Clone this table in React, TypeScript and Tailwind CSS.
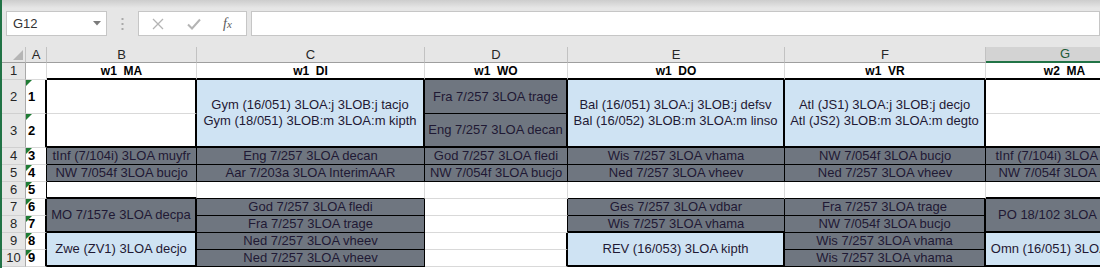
import React from "react";

type Bd = "g" | "t" | "k";
type Fill = "w" | "s" | "b";

const RIGHT: Record<Bd, string> = {
  g: "border-r border-r-[#d9d9d9]",
  t: "border-r border-r-black",
  k: "border-r-2 border-r-black",
};
const BOTTOM: Record<Bd, string> = {
  g: "border-b border-b-[#d9d9d9]",
  t: "border-b border-b-black",
  k: "border-b-2 border-b-black",
};
const FILL: Record<Fill, string> = {
  w: "bg-white",
  s: "bg-[#6f7680]",
  b: "bg-[#cfe3f3]",
};

type Spec = {
  r: Bd;
  b: Bd;
  f?: Fill;
  span?: boolean;
  text?: string[];
  head?: boolean;
};

const W = (r: Bd, b: Bd): Spec => ({ r, b, f: "w" });
const S = (r: Bd, b: Bd, t: string, span = false): Spec => ({ r, b, f: "s", text: [t], span });
const BL = (r: Bd, b: Bd, text: string[], span = false): Spec => ({ r, b, f: "b", text, span });

// columns B..G, cells already covered by a merged cell above are left out
const rows: { a: Bd; cells: Spec[] }[] = [
  {
    a: "g",
    cells: [
      { r: "g", b: "k", text: ["w1  MA"], head: true },
      { r: "g", b: "k", text: ["w1  DI"], head: true },
      { r: "g", b: "k", text: ["w1  WO"], head: true },
      { r: "g", b: "k", text: ["w1  DO"], head: true },
      { r: "g", b: "k", text: ["w1  VR"], head: true },
      { r: "g", b: "k", text: ["w2  MA"], head: true },
    ],
  },
  {
    a: "k",
    cells: [
      W("k", "g"),
      BL("k", "k", ["Gym (16/051) 3LOA:j 3LOB:j tacjo", "Gym (18/051) 3LOB:m 3LOA:m kipth"], true),
      S("k", "t", "Fra 7/257 3LOA trage"),
      BL("k", "k", ["Bal (16/051) 3LOA:j 3LOB:j defsv", "Bal (16/052) 3LOB:m 3LOA:m linso"], true),
      BL("k", "k", ["Atl (JS1) 3LOA:j 3LOB:j decjo", "Atl (JS2) 3LOB:m 3LOA:m degto"], true),
      W("g", "g"),
    ],
  },
  {
    a: "k",
    cells: [W("k", "k"), S("k", "k", "Eng 7/257 3LOA decan"), W("g", "k")],
  },
  {
    a: "t",
    cells: [
      S("t", "t", "tInf (7/104i) 3LOA muyfr"),
      S("t", "t", "Eng 7/257 3LOA decan"),
      S("t", "t", "God 7/257 3LOA fledi"),
      S("t", "t", "Wis 7/257 3LOA vhama"),
      S("t", "t", "NW 7/054f 3LOA bucjo"),
      S("t", "t", "tInf (7/104i) 3LOA muyfr"),
    ],
  },
  {
    a: "t",
    cells: [
      S("t", "t", "NW 7/054f 3LOA bucjo"),
      S("t", "t", "Aar 7/203a 3LOA InterimAAR"),
      S("t", "t", "NW 7/054f 3LOA bucjo"),
      S("t", "t", "Ned 7/257 3LOA vheev"),
      S("t", "t", "Ned 7/257 3LOA vheev"),
      S("t", "t", "NW 7/054f 3LOA bucjo"),
    ],
  },
  {
    a: "t",
    cells: [W("g", "k"), W("g", "t"), W("g", "g"), W("g", "t"), W("g", "t"), W("g", "k")],
  },
  {
    a: "k",
    cells: [
      S("k", "k", "MO 7/157e 3LOA decpa", true),
      S("t", "t", "God 7/257 3LOA fledi"),
      W("t", "g"),
      S("t", "t", "Ges 7/257 3LOA vdbar"),
      S("k", "t", "Fra 7/257 3LOA trage"),
      S("g", "k", "PO 18/102 3LOA decjo", true),
    ],
  },
  {
    a: "k",
    cells: [
      S("t", "t", "Fra 7/257 3LOA trage"),
      W("t", "g"),
      S("t", "k", "Wis 7/257 3LOA vhama"),
      S("k", "t", "NW 7/054f 3LOA bucjo"),
    ],
  },
  {
    a: "k",
    cells: [
      BL("k", "k", ["Zwe (ZV1) 3LOA decjo"], true),
      S("t", "t", "Ned 7/257 3LOA vheev"),
      W("k", "g"),
      BL("k", "k", ["REV (16/053) 3LOA kipth"], true),
      S("k", "t", "Wis 7/257 3LOA vhama"),
      BL("g", "k", ["Omn (16/051) 3LOA kipth"], true),
    ],
  },
  {
    a: "k",
    cells: [
      S("t", "t", "Ned 7/257 3LOA vheev"),
      W("k", "g"),
      S("k", "t", "Wis 7/257 3LOA vhama"),
    ],
  },
];

const Cell = ({ s }: { s: Spec }) => (
  <div
    className={`${RIGHT[s.r]} ${BOTTOM[s.b]} ${FILL[s.f ?? "w"]} ${
      s.span ? "row-span-2" : ""
    } flex flex-col items-center justify-center overflow-hidden whitespace-pre`}
  >
    {s.text?.map((line, i) =>
      s.head ? (
        <span key={i} className="text-[12px] font-bold leading-[16px] text-black">
          {line}
        </span>
      ) : (
        <span key={i} className="text-[13px] leading-[16px] text-[#1f1934]">
          {line}
        </span>
      )
    )}
  </div>
);

const cols = ["A", "B", "C", "D", "E", "F", "G"];

export default function App() {
  return (
    <div
      className="w-[1100px] h-[268px] overflow-hidden bg-white border-l-2 border-l-[#217346]"
      style={{ fontFamily: '"Liberation Sans", Arial, sans-serif' }}
    >
      {/* formula bar */}
      <div className="h-[47px] bg-[#e6e6e6]">
        <div className="h-[8px] bg-linear-to-b from-[#cdcdcd] to-[#e6e6e6]" />
        <div className="flex items-center h-[25px] mt-[3px]">
          <div className="ml-[4px] w-[101px] h-[25px] bg-white border border-[#c6c6c6] flex items-center justify-between pl-[6px] pr-[5px]">
            <span className="text-[13px] text-[#333]">G12</span>
            <svg width="8" height="5" viewBox="0 0 8 5">
              <path d="M0 0 L8 0 L4 4.5 Z" fill="#7b7b7b" />
            </svg>
          </div>
          <div className="w-[31px] flex justify-center">
            <svg width="3" height="12" viewBox="0 0 3 12">
              <rect x="0.5" y="0" width="2" height="2" fill="#a9a9a9" />
              <rect x="0.5" y="5" width="2" height="2" fill="#a9a9a9" />
              <rect x="0.5" y="10" width="2" height="2" fill="#a9a9a9" />
            </svg>
          </div>
          <div className="w-[109px] h-[25px] bg-white border border-[#c6c6c6] flex items-center">
            <svg className="ml-[13px]" width="12" height="12" viewBox="0 0 12 12">
              <path d="M1 1 L11 11 M11 1 L1 11" stroke="#b4b4b4" strokeWidth="1.3" />
            </svg>
            <svg className="ml-[23px]" width="14" height="12" viewBox="0 0 14 12">
              <path d="M1 6.5 L5 10.5 L13 1.5" stroke="#b4b4b4" strokeWidth="2" fill="none" />
            </svg>
            <span
              className="ml-[22px] text-[14px] italic text-[#5a5a5a]"
              style={{ fontFamily: '"Liberation Serif", "Times New Roman", serif' }}
            >
              f<span className="text-[11px]">x</span>
            </span>
          </div>
          <div className="ml-[4px] flex-1 h-[25px] bg-white border border-[#c6c6c6]" />
        </div>
      </div>

      {/* sheet */}
      <div className="grid grid-cols-[24px_21px_150px_228px_143px_217px_201px_158px] grid-rows-[16px_17px_34px_34px_17px_17px_17px_17px_17px_17px_17px] w-[1162px]">
        <div className="bg-[#e6e6e6] border-r border-r-[#c2c2c2] border-b border-b-[#9e9e9e] flex items-end justify-end pr-[2px] pb-[2px]">
          <svg width="10" height="10" viewBox="0 0 10 10">
            <path d="M10 0 L10 10 L0 10 Z" fill="#b5b5b5" />
          </svg>
        </div>
        {cols.map((c) =>
          c === "G" ? (
            <div
              key={c}
              className="bg-[#d3d3d3] border-b-2 border-b-[#217346] flex items-center justify-center text-[13px] text-[#1d5c38]"
            >
              {c}
            </div>
          ) : (
            <div
              key={c}
              className="bg-[#e6e6e6] border-r border-r-[#c2c2c2] border-b border-b-[#9e9e9e] flex items-center justify-center text-[13px] text-[#262626]"
            >
              {c}
            </div>
          )
        )}

        {rows.map((row, i) => (
          <React.Fragment key={i}>
            <div className="bg-[#e6e6e6] border-r border-r-[#a9a9a9] border-b border-b-[#d0d0d0] flex items-center justify-center text-[13px] text-[#262626]">
              {i + 1}
            </div>
            <div className={`relative bg-white ${RIGHT[row.a]} border-b border-b-[#d9d9d9] flex items-center pl-[2px]`}>
              {i > 0 && (
                <>
                  <div className="absolute left-0 top-0 w-0 h-0 border-t-[6px] border-t-[#1e7b34] border-r-[6px] border-r-transparent" />
                  <span className="text-[13px] font-bold text-black leading-[16px]">{i}</span>
                </>
              )}
            </div>
            {row.cells.map((s, j) => (
              <Cell key={j} s={s} />
            ))}
          </React.Fragment>
        ))}
      </div>
    </div>
  );
}
